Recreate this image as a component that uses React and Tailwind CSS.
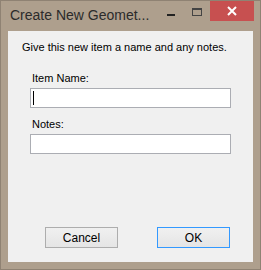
import React from 'react';

const App = () => {
  return (
    <div className="w-[261px] h-[270px] bg-[#ae9f8d] border border-[#8f8273] flex flex-col font-['Liberation_Sans',Arial,sans-serif]">
      {/* title bar */}
      <div className="h-[30px] flex items-start">
        <div className="flex-1 min-w-0 pl-[9px] pt-[4px] text-[14px] text-[#2b2b2b] leading-[20px] whitespace-nowrap overflow-hidden">
          Create New Geomet...
        </div>
        <div className="w-[26px] h-[21px] flex items-center justify-center">
          <div className="w-[8px] h-[2px] bg-[#222] mt-[6px]" />
        </div>
        <div className="w-[26px] h-[21px] flex items-center justify-center">
          <div className="w-[10px] h-[8px] border border-[#444] border-t-2 mt-[1px]" />
        </div>
        <div className="w-[44px] h-[20px] bg-[#c75050] flex items-center justify-center mr-[6px]">
          <svg width="10" height="10" viewBox="0 0 10 10">
            <path d="M1 1L9 9M9 1L1 9" stroke="#fff" strokeWidth="2" />
          </svg>
        </div>
      </div>

      {/* client area */}
      <div className="mx-[7px] h-[231px] bg-[#f0f0f0] text-[11px] text-black flex flex-col">
        <div className="pl-[14px] pt-[10px] leading-[13px]">Give this new item a name and any notes.</div>

        <div className="pl-[24px] mt-[18px] leading-[13px]">Item Name:</div>
        <div className="ml-[22px] mt-[3px] w-[201px] h-[20px] bg-white border border-[#abadb3] flex items-center pl-[2px]">
          <div className="w-px h-[14px] bg-black" />
        </div>

        <div className="pl-[24px] mt-[10px] leading-[13px]">Notes:</div>
        <div className="ml-[22px] mt-[3px] w-[201px] h-[20px] bg-white border border-[#abadb3]" />

        <div className="flex mt-auto mb-[14px] pl-[37px] gap-[39px]">
          <button className="w-[73px] h-[21px] border border-[#adadad] bg-gradient-to-b from-[#f0f0f0] to-[#e5e5e5] text-[12px] leading-none">
            Cancel
          </button>
          <button className="w-[73px] h-[21px] border border-[#3399ff] bg-gradient-to-b from-[#f0f0f0] to-[#e5e5e5] text-[12px] leading-none">
            OK
          </button>
        </div>
      </div>
    </div>
  );
};

export default App;
